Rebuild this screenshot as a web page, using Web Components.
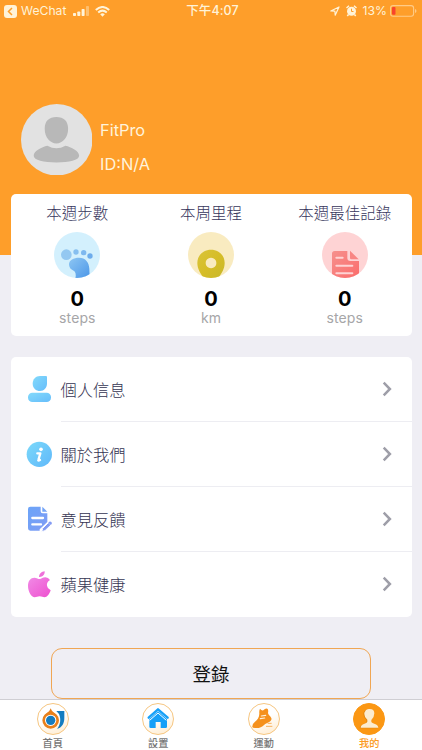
<!DOCTYPE html>
<html lang="zh-Hant">
<head>
<meta charset="utf-8">
<meta name="viewport" content="width=device-width">
<title>FitPro</title>
<style>
html,body{margin:0;height:100%}
body{font-family:Inter,"Noto Sans CJK TC",sans-serif;overflow:hidden}
</style>
</head>
<body>
<fit-app></fit-app>
<script>
function define(name, html) {
  customElements.define(name, class extends HTMLElement {
    constructor() {
      super();
      this.attachShadow({mode: 'open'}).innerHTML = typeof html === 'function' ? html(this) : html;
    }
  });
}

const icons = {
  steps: ['0 0 138 138', `<defs><linearGradient id="g" x1="0" y1="0" x2="1" y2="1"><stop stop-color="#8dc6f3"/><stop offset="1" stop-color="#4c97e8"/></linearGradient><clipPath id="c"><circle cx="69" cy="69" r="69"/></clipPath></defs>
    <circle cx="69" cy="69" r="69" fill="#d3f0fd"/><g clip-path="url(#c)"><circle cx="37" cy="68" r="16" fill="#94c8f1"/><circle cx="66" cy="60" r="8" fill="#86bff0"/><circle cx="89" cy="62" r="8" fill="#7db8ef"/><circle cx="108" cy="72" r="8" fill="#6dacec"/>
    <path fill="url(#g)" d="M45 97C45 84 59 77 75 77C95 77 105 91 106 110L107 138H64Q68 121 59 116Q45 111 45 97Z"/></g>`],
  distance: ['0 0 138 138', `<defs><linearGradient id="g" x1="0" y1="0" x2="1" y2="1"><stop stop-color="#d9c43a"/><stop offset=".5" stop-color="#d6bd27"/><stop offset="1" stop-color="#c7b82c"/></linearGradient><clipPath id="c"><circle cx="69" cy="69" r="69"/></clipPath></defs>
    <circle cx="69" cy="69" r="69" fill="#f9ebc0"/><path clip-path="url(#c)" fill="url(#g)" fill-rule="evenodd" d="M69 53C93 53 110 70 110 93C110 112 99 127 88 142H50C39 127 28 112 28 93C28 70 45 53 69 53ZM69 77a16 16 0 1 0 .1 0Z"/>`],
  record: ['0 0 138 138', `<defs><linearGradient id="g" x1="0" y1="0" x2="1" y2="1"><stop stop-color="#f6908d"/><stop offset="1" stop-color="#fb6c6b"/></linearGradient><clipPath id="c"><circle cx="69" cy="69" r="69"/></clipPath></defs>
    <circle cx="69" cy="69" r="69" fill="#fed3d4"/><g clip-path="url(#c)"><path fill="url(#g)" d="M38 57H76V78Q76 87 85 87H111V140H30V65Q30 57 38 57Z"/><path fill="#f88583" d="M84 56L110 82H88Q84 82 84 78Z"/><path d="M43 77H62M43 101H91M43 124H91" stroke="#fed3d4" stroke-width="6" stroke-linecap="round"/></g>`],
  person: ['0 0 84 84', `<defs><linearGradient id="g" x1="0" y1="0" x2="1" y2="1"><stop stop-color="#83dafb"/><stop offset="1" stop-color="#66bdfb"/></linearGradient></defs>
    <path fill="url(#g)" d="M42 3H60Q63 3 63 6V25C63 39 54 48 42 48S20 39 20 26S29 3 42 3Z"/><rect x="6" y="53" width="69" height="28" rx="13" fill="url(#g)"/>`],
  info: ['0 0 84 84', `<defs><linearGradient id="g" x1="0" y1="0" x2="1" y2="1"><stop stop-color="#7bd9fa"/><stop offset="1" stop-color="#60b8fa"/></linearGradient></defs>
    <circle cx="40" cy="43" r="38" fill="url(#g)"/><circle cx="45" cy="28" r="5.500" fill="#fff"/><path d="M34 40H43L37 60Q36 63 42 60" fill="none" stroke="#fff" stroke-width="7" stroke-linecap="round" stroke-linejoin="round"/>`],
  note: ['0 0 84 84', `<defs><linearGradient id="g" x1="0" y1="0" x2="1" y2="1"><stop stop-color="#6ba4f8"/><stop offset="1" stop-color="#819cf4"/></linearGradient></defs>
    <path fill="url(#g)" d="M13 5H44V19Q44 25 50 25H64V51L41 73V77H13Q6 77 6 70V12Q6 5 13 5Z"/><path fill="#74a4f7" d="M49 5L64 20H49Z"/><path d="M19 39H51M19 58H45" stroke="#fff" stroke-width="7" stroke-linecap="round"/>
    <path d="M47 80L50 70L67 53L75 60L57 77Z" fill="#839bf3" stroke="#fff" stroke-width="3"/><path d="M67 53L70 50Q73 48 76 51T77 57L74 60Z" fill="#839bf3"/>`],
  apple: ['0 0 84 84', `<defs><linearGradient id="g" x1="0" y1="0" x2="1" y2="1"><stop stop-color="#f18ae6"/><stop offset="1" stop-color="#ee50cf"/></linearGradient></defs>
    <path fill="url(#g)" d="M41 27C46 27 50 22 58 22Q67 22 72 30C64 35 62 41 63 47Q64 56 74 61C70 73 63 82 56 82C50 82 48 79 41 79S32 82 26 82C16 82 6 64 6 48C6 32 14 23 25 23C32 23 37 27 41 27Z"/><path fill="#ee70d9" d="M39 21C39 11 47 5 56 4C57 14 49 22 39 21Z"/>`],
  home: ['0 0 96 96', `<path d="M58 24H82V44C82 62 75 73 60 78C70 66 73 48 66 33Z" fill="#147cc0"/><path d="M41 16C38 26 29 31 22 39L41 47L60 39C53 31 44 26 41 16Z" fill="#e8801c"/><circle cx="41" cy="52" r="21" fill="#fff" stroke="#e8801c" stroke-width="8"/><circle cx="41" cy="52" r="14" fill="#147cc0"/>`],
  settings: ['0 0 96 96', `<path d="M48 25L75 48V71Q75 75 71 75H56V57H41V75H26Q22 75 22 71V48Z" fill="#16a0f8"/><path d="M23 52L48 30L73 52" fill="none" stroke="#fff" stroke-width="3"/><path d="M20 44L48 19L77 44" fill="none" stroke="#16a0f8" stroke-width="7" stroke-linecap="round" stroke-linejoin="round"/>`],
  sport: ['0 0 96 96', `<path d="M13 72Q12 63 21 56C28 51 34 43 34 32Q33 22 36 17Q41 24 46 22Q53 14 58 17Q62 19 60 30C62 39 73 42 70 50C66 59 56 58 49 65Q39 75 26 75Q13 76 13 72Z" fill="#f5911d"/><path d="M40 39L53 37M37 47L50 45" stroke="#fff2dc" stroke-width="3.500" stroke-linecap="round"/><path d="M59 61H71M54 70H73" stroke="#f5a443" stroke-width="2.500"/>`],
  mine: ['0 0 96 96', `<path d="M35 26Q38 17 49 18Q63 18 64 30Q65 43 55 51V56C57 62 76 61 77 75H22C23 61 40 63 42 56V50Q33 43 33 32Q32 28 35 26Z" fill="#ad680b" opacity=".3" transform="translate(-2 1)"/><path d="M36 26Q39 17 50 18Q64 18 64 31Q64 43 55 51V56C57 62 75 61 76 74H23C24 61 41 63 43 56V50Q34 43 34 33Q33 28 36 26Z" fill="#fcecd0"/>`],
  avatar: ['0 0 214 214', `<circle cx="107" cy="107" r="107" fill="#e2e2e2"/><path fill="#b8b8b8" d="M106 39C128 39 141 51 141 74C141 100 125 118 106 118S71 100 71 74C71 51 84 39 106 39ZM79 125Q106 140 133 125C150 129 174 140 174 155C174 168 144 175 106 175S38 168 38 155C38 140 62 129 79 125Z"/>`],
  next: ['0 0 10 16', `<path d="M1.700 1.700L7.900 8L1.700 14.300" fill="none" stroke="#9e9ea8" stroke-width="2.500"/>`]
};

customElements.define('fit-icon', class extends HTMLElement {
  constructor() { super(); this.attachShadow({mode: 'open'}); }
  connectedCallback() {
    const [box, art] = icons[this.getAttribute('name')];
    this.shadowRoot.innerHTML = `<style>:host{display:block;flex:none}svg{display:block;width:100%;height:100%}</style><svg viewBox="${box}" aria-hidden="true">${art}</svg>`;
  }
});

define('fit-status', `<style>
  :host{display:grid;grid-template-columns:1fr auto 1fr;align-items:center;height:22px;padding:0 5px 0 4px;color:#fff3d8;font-size:12.500px;line-height:22px;box-sizing:border-box}
  div{display:flex;align-items:center} svg{display:block;flex:none}
  .l span{margin:0 7px 0 4px;font-size:12.200px;letter-spacing:0}.r{justify-content:flex-end}.r span{margin:0 3px 0 6px;font-size:12.200px}
  .t{font-weight:500;letter-spacing:.1px;padding-left:4px}
</style>
<div class="l"><svg width="13" height="13" viewBox="0 0 13 13"><rect width="13" height="13" rx="3" fill="#fff3d8"/><path d="M8 3L4.500 6.500L8 10" fill="none" stroke="#fe9e2a" stroke-width="1.500"/></svg><span>WeChat</span>
<svg width="17" height="11" viewBox="0 0 17 11" fill="#fff3d8"><rect y="7" width="3" height="3" rx=".7"/><rect x="4.300" y="5.500" width="3" height="4.500" rx=".7"/><rect x="8.600" y="3" width="3" height="7" rx=".7"/><rect x="13" width="3" height="10" rx=".7" opacity=".4"/></svg>
<svg style="margin-left:5px" width="15" height="11" viewBox="0 0 15 11" fill="none" stroke="#fff3d8" stroke-width="2"><path d="M.8 4Q7.500-2 14.200 4M3.200 6.500Q7.500 2.800 11.800 6.500"/><path d="M5.200 8.300Q7.500 6.400 9.800 8.300L7.500 10.700Z" fill="#fff3d8" stroke="none"/></svg></div>
<div class="t">下午4:07</div>
<div class="r"><svg width="10" height="10" viewBox="0 0 10 10"><path d="M.8 5L9 1L5.200 9.200L4.900 5.200Z" fill="none" stroke="#fff3d8" stroke-width="1.200" stroke-linejoin="round"/></svg>
<svg style="margin-left:6px" width="11" height="12" viewBox="0 0 11 12"><circle cx="5.500" cy="6.200" r="4.500" fill="#fff3d8"/><path d="M.5 3L3 .8M8 .8L10.500 3M2.500 9.500L1.300 11M8.500 9.500L9.700 11" stroke="#fff3d8" stroke-width="1.500"/><path d="M5.500 3.700V6.500H7.500" fill="none" stroke="#fe9e2a"/></svg>
<span>13%</span><svg width="27" height="12" viewBox="0 0 27 12"><rect x=".6" y=".6" width="23" height="10.600" rx="2.500" fill="none" stroke="#ffcb87" stroke-width="1.100"/><path d="M25 4V8Q26.500 7.500 26.500 6T25 4" fill="#ffcb87"/><rect x="2" y="2" width="3.500" height="7.800" rx="1" fill="#f8442c"/></svg></div>`);

define('fit-profile', `<style>
  :host{display:flex;align-items:center;gap:8px;padding:82px 20px 0 20.500px;height:71px;color:#fff3db;font-size:16.400px}
  fit-icon{width:71.500px;height:71.500px} div{display:grid;row-gap:14px;line-height:20px;padding-top:14px}
</style><fit-icon name="avatar"></fit-icon><div><slot name="name"></slot><slot name="id"></slot></div>`);

define('fit-stats', `<style>:host{display:grid;grid-template-columns:repeat(3,1fr);height:142px;margin:19px 10.500px 0;background:#fff;border-radius:5px}</style><slot></slot>`);

define('fit-stat', el => `<style>
  :host{display:flex;flex-direction:column;align-items:center;padding-top:9px}
  .h{font-size:15.500px;line-height:22px;color:#37365c;font-weight:300} fit-icon{width:46px;height:46px;margin-top:7px}
  b{font-size:20px;line-height:24px;margin-top:9px;color:#000;font-weight:700}
  .u{font-size:14px;line-height:17px;color:#a6a6a8;margin-top:-2px;letter-spacing:.1px}
</style><span class="h">${el.getAttribute('label')}</span><fit-icon name="${el.getAttribute('icon')}"></fit-icon><b>0</b><span class="u">${el.getAttribute('unit')}</span>`);

define('fit-menu', `<style>:host{display:block;height:260px;margin:21px 10.500px 0;background:#fff;border-radius:5px}</style><slot></slot>`);

define('fit-row', el => `<style>
  :host{display:flex;gap:6.500px;height:65.100px;padding-left:15.500px}
  :host(:last-child) div{border-color:transparent}
  .i{width:28px;height:28px;margin-top:18px}
  div{flex:1;display:flex;align-items:center;justify-content:space-between;border-bottom:1px solid #ededf2;padding-right:20px;box-sizing:border-box;font-size:16.300px;font-weight:300;color:#353452}
  .n{width:10px;height:16px}
</style><fit-icon class="i" name="${el.getAttribute('icon')}"></fit-icon><div><slot></slot><fit-icon class="n" name="next"></fit-icon></div>`);

define('fit-button', `<style>:host{display:block;margin:31px 51px 0}
  button{display:block;width:100%;height:51px;background:transparent;border:1.500px solid #f0a653;border-radius:11px;font:18.500px Inter,"Noto Sans CJK TC",sans-serif;color:#111;padding:0 0 2px}
</style><button><slot></slot></button>`);

define('fit-tabs', `<style>:host{display:grid;grid-template-columns:repeat(4,1fr);height:51px;box-sizing:border-box;border-top:1px solid #cfced3;background:#fff;margin-top:auto}</style><slot></slot>`);

define('fit-tab', el => `<style>
  :host{display:flex;flex-direction:column;align-items:center;padding-top:3px;font-size:10.200px;line-height:14px;color:#777;font-weight:500}
  :host([active]){color:#fb9a20}
  div{width:32px;height:32px;box-sizing:border-box;border-radius:50%;background:linear-gradient(160deg,#fff 45%,#ffebcd);border:1px solid #f6c681}
  :host([active]) div{background:#fb9713;border-color:#fb9713}
  fit-icon{width:32px;height:32px;margin:-1px}
  span{margin-top:1px}
</style><div><fit-icon name="${el.getAttribute('icon')}"></fit-icon></div><span><slot></slot></span>`);

define('fit-app', `<style>:host{display:flex;flex-direction:column;height:750px;width:422px;background:linear-gradient(#fe9e2a 255px,#efeef4 255px)}</style>
<fit-status></fit-status>
<fit-profile><span slot="name">FitPro</span><span slot="id">ID:N/A</span></fit-profile>
<fit-stats><fit-stat label="本週步數" icon="steps" unit="steps"></fit-stat><fit-stat label="本周里程" icon="distance" unit="km"></fit-stat><fit-stat label="本週最佳記錄" icon="record" unit="steps"></fit-stat></fit-stats>
<fit-menu><fit-row icon="person">個人信息</fit-row><fit-row icon="info">關於我們</fit-row><fit-row icon="note">意見反饋</fit-row><fit-row icon="apple">蘋果健康</fit-row></fit-menu>
<fit-button>登錄</fit-button>
<fit-tabs><fit-tab icon="home">首頁</fit-tab><fit-tab icon="settings">設置</fit-tab><fit-tab icon="sport">運動</fit-tab><fit-tab icon="mine" active>我的</fit-tab></fit-tabs>`);
</script>
</body>
</html>
